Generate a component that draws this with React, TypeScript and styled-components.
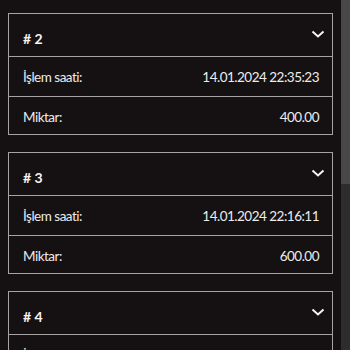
import React from "react";
import styled, { createGlobalStyle } from "styled-components";

const Global = createGlobalStyle`
  html, body { margin: 0; padding: 0; background: #151112; overflow: hidden; }
  body { font-family: Lato, "Noto Sans", sans-serif; color: #ececec; }
`;

const Page = styled.div`
  height: 100vh;
  display: flex;
  background: #151112;
  overflow: hidden;
`;

const Content = styled.div`
  flex: 1;
  min-width: 0;
  overflow: hidden;
`;

const Rail = styled.div`
  width: 9px;
  flex: none;
  background: #2d2d2d;
  display: flex;
  flex-direction: column;
`;

const Thumb = styled.div`
  height: 184px;
  background: #484848;
`;

const List = styled.div`
  display: flex;
  flex-direction: column;
  gap: 17px;
  padding: 13px 8px 40px 8px;
`;

const Card = styled.div`
  border: 1px solid #a7a3a2;
  display: flex;
  flex-direction: column;
`;

const Header = styled.div`
  height: 43px;
  box-sizing: border-box;
  display: flex;
  justify-content: space-between;
  align-items: flex-start;
  padding: 0 7px 0 14px;
  border-bottom: 1px solid #a7a3a2;
`;

const Title = styled.span`
  font-weight: 700;
  font-size: 14px;
  line-height: 16px;
  margin-top: 17px;
  color: #f4f4f4;
`;

const Chevron = styled.svg`
  width: 14px;
  height: 10px;
  margin-top: 15px;
`;

const Row = styled.div<{ $last?: boolean }>`
  height: ${(p) => (p.$last ? 37 : 40)}px;
  box-sizing: border-box;
  display: flex;
  justify-content: space-between;
  align-items: center;
  padding: ${(p) => (p.$last ? "3px" : "1px")} 13px 0 14px;
  border-bottom: ${(p) => (p.$last ? "none" : "1px solid #a7a3a2")};
  font-size: 13.5px;
  letter-spacing: -0.5px;
`;

const Label = styled.span``;
const Value = styled.span``;

const items = [
  { n: 2, time: "14.01.2024 22:35:23", amount: "400.00" },
  { n: 3, time: "14.01.2024 22:16:11", amount: "600.00" },
  { n: 4, time: "14.01.2024 21:58:40", amount: "250.00" },
];

export default function App() {
  return (
    <>
      <Global />
      <Page>
        <Content>
          <List>
            {items.map((it) => (
              <Card key={it.n}>
                <Header>
                  <Title># {it.n}</Title>
                  <Chevron viewBox="0 0 14 10">
                    <path d="M1.5 2.5 L7 7.5 L12.5 2.5" fill="none" stroke="#f4f4f4" strokeWidth="2" />
                  </Chevron>
                </Header>
                <Row>
                  <Label>İşlem saati:</Label>
                  <Value>{it.time}</Value>
                </Row>
                <Row $last>
                  <Label>Miktar:</Label>
                  <Value>{it.amount}</Value>
                </Row>
              </Card>
            ))}
          </List>
        </Content>
        <Rail>
          <Thumb />
        </Rail>
      </Page>
    </>
  );
}
